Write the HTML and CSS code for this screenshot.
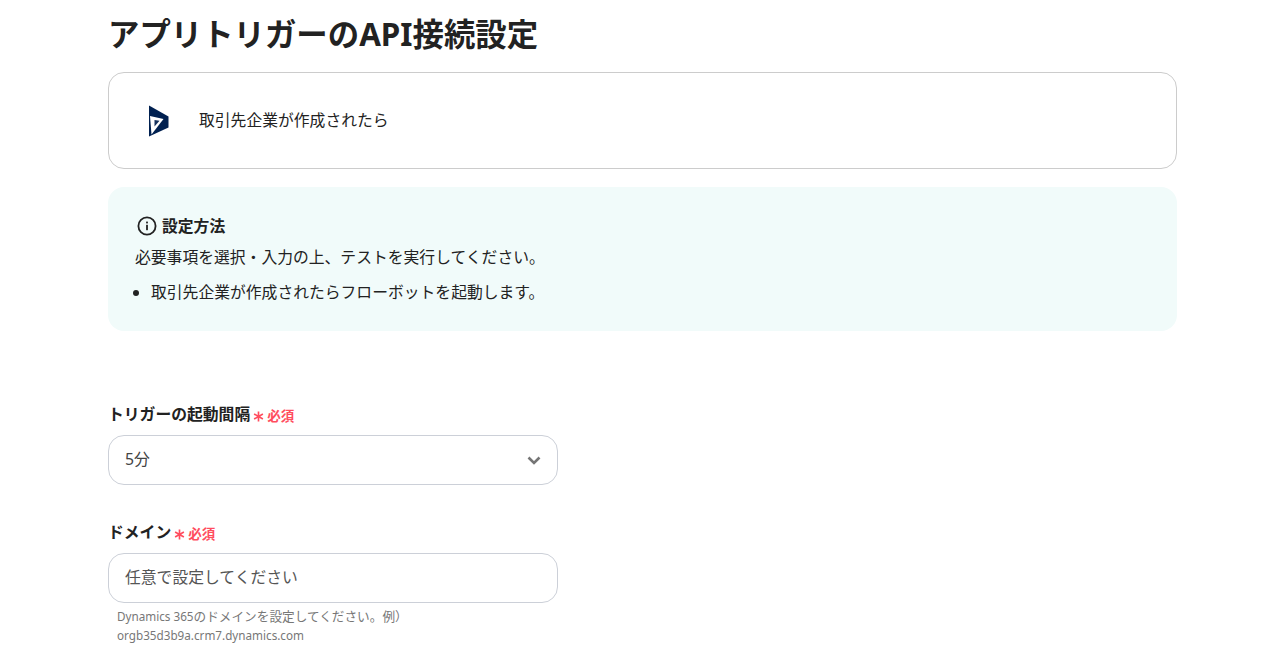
FILE: index.html
```html
<!DOCTYPE html>
<html lang="ja">
<head>
<meta charset="utf-8">
<title>アプリトリガーのAPI接続設定</title>
<link rel="stylesheet" href="styles.css">
</head>
<body>
<main class="page">
  <h1 class="title">アプリトリガーのAPI接続設定</h1>
  <section class="trigger-card">
    <svg class="logo" width="22" height="32" viewBox="0 0 22 32" aria-hidden="true">
      <path fill="#002050" d="M1 0.5 L20.5 11.5 L20.5 22.5 L1 31.5 Z"/>
      <path fill="#fff" d="M2 11 L15.5 14 L3.5 29.5 Z"/>
      <path fill="#14305c" d="M6.5 15 L11.5 15.8 L6.5 21.5 Z"/>
    </svg>
    <span class="trigger-name">取引先企業が作成されたら</span>
  </section>
  <section class="info">
    <div class="info-head">
      <svg class="info-icon" width="20" height="20" viewBox="0 0 20 20" aria-hidden="true">
        <circle cx="10" cy="10" r="8.6" fill="none" stroke="#222" stroke-width="1.8"/>
        <rect x="9.1" y="8.8" width="1.8" height="5.4" fill="#222"/>
        <rect x="9.1" y="5.6" width="1.8" height="1.8" fill="#222"/>
      </svg>
      <span class="info-title">設定方法</span>
    </div>
    <p class="info-text">必要事項を選択・入力の上、テストを実行してください。</p>
    <ul class="info-list">
      <li>取引先企業が作成されたらフローボットを起動します。</li>
    </ul>
  </section>
  <form class="form">
    <div class="field">
      <div class="label">
        <span class="label-text">トリガーの起動間隔</span>
        <span class="required">
          <svg class="star" width="11" height="11" viewBox="0 0 10 10" aria-hidden="true"><path d="M5 0.5 V9.5 M1 2.7 L9 7.3 M1 7.3 L9 2.7" stroke="#ff4d5e" stroke-width="1.5" fill="none"/></svg>
          <span>必須</span>
        </span>
      </div>
      <div class="control select">
        <span class="control-text">5分</span>
        <svg class="chevron" width="14" height="9" viewBox="0 0 14 9" aria-hidden="true">
          <path d="M1.5 1.5 L7 7 L12.5 1.5" fill="none" stroke="#757575" stroke-width="2.6"/>
        </svg>
      </div>
    </div>
    <div class="field">
      <div class="label">
        <span class="label-text">ドメイン</span>
        <span class="required">
          <svg class="star" width="11" height="11" viewBox="0 0 10 10" aria-hidden="true"><path d="M5 0.5 V9.5 M1 2.7 L9 7.3 M1 7.3 L9 2.7" stroke="#ff4d5e" stroke-width="1.5" fill="none"/></svg>
          <span>必須</span>
        </span>
      </div>
      <div class="control input"><span class="control-text placeholder">任意で設定してください</span></div>
      <p class="help"><span class="latin">Dynamics 365</span>のドメインを設定してください。例）<br><span class="latin">orgb35d3b9a.crm7.dynamics.com</span></p>
    </div>
  </form>
</main>
</body>
</html>
```

FILE: styles.css
```css
* { box-sizing: border-box; }
html, body { margin: 0; padding: 0; background: #fff; overflow: hidden; }
body {
  height: 650px;
  font-family: "Noto Sans", "Noto Sans CJK JP", sans-serif;
  color: #222;
  font-size: 15.8px;
}
.page { width: 1069px; margin-left: 108px; }
.title {
  margin: 0;
  height: 72px;
  padding-top: 10px;
  font-size: 31.4px;
  line-height: 48px;
  font-weight: 700;
  color: #222;
}
.trigger-card {
  height: 97px;
  border: 1px solid #ccc;
  border-radius: 16px;
  display: flex;
  align-items: center;
  padding-left: 39px;
  gap: 29px;
}
.logo { flex: none; }
.trigger-name { font-size: 15.8px; line-height: 24px; padding-bottom: 2px; }
.info {
  margin-top: 18px;
  height: 144px;
  background: #f1fbfa;
  border-radius: 16px;
  padding: 27px 27px 0;
}
.info-head { display: flex; align-items: center; gap: 5px; height: 24px; padding-left: 2px; }
.info-icon { flex: none; }
.info-title { font-size: 15.8px; font-weight: 700; line-height: 24px; }
.info-text { margin: 7px 0 0; font-size: 15.8px; line-height: 24px; }
.info-list { margin: 11px 0 0; padding-left: 16px; font-size: 15.8px; line-height: 24px; }
.form { margin-top: 72px; width: 450px; }
.field { margin-bottom: 36px; }
.label { display: flex; align-items: center; height: 24px; font-size: 15.8px; font-weight: 700; margin-bottom: 8px; }
.label-text { padding-bottom: 3px; }
.required { display: inline-flex; align-items: center; margin-left: 3px; font-size: 13.5px; color: #ff4d5e; padding-bottom: 1px; }
.star { flex: none; margin-right: 3px; margin-top: 3px; }
.control {
  height: 50px;
  border: 1px solid #ccd0d8;
  border-radius: 16px;
  display: flex;
  align-items: center;
  padding: 0 16px;
  color: #444;
  font-size: 15.8px;
}
.control-text { padding-bottom: 3px; }
.placeholder { color: #555; }
.select { justify-content: space-between; }
.chevron { flex: none; }
.help { margin: 4px 0 0 9px; font-size: 12.65px; line-height: 19px; color: #777; }
.latin { font-size: 11.7px; }
```
